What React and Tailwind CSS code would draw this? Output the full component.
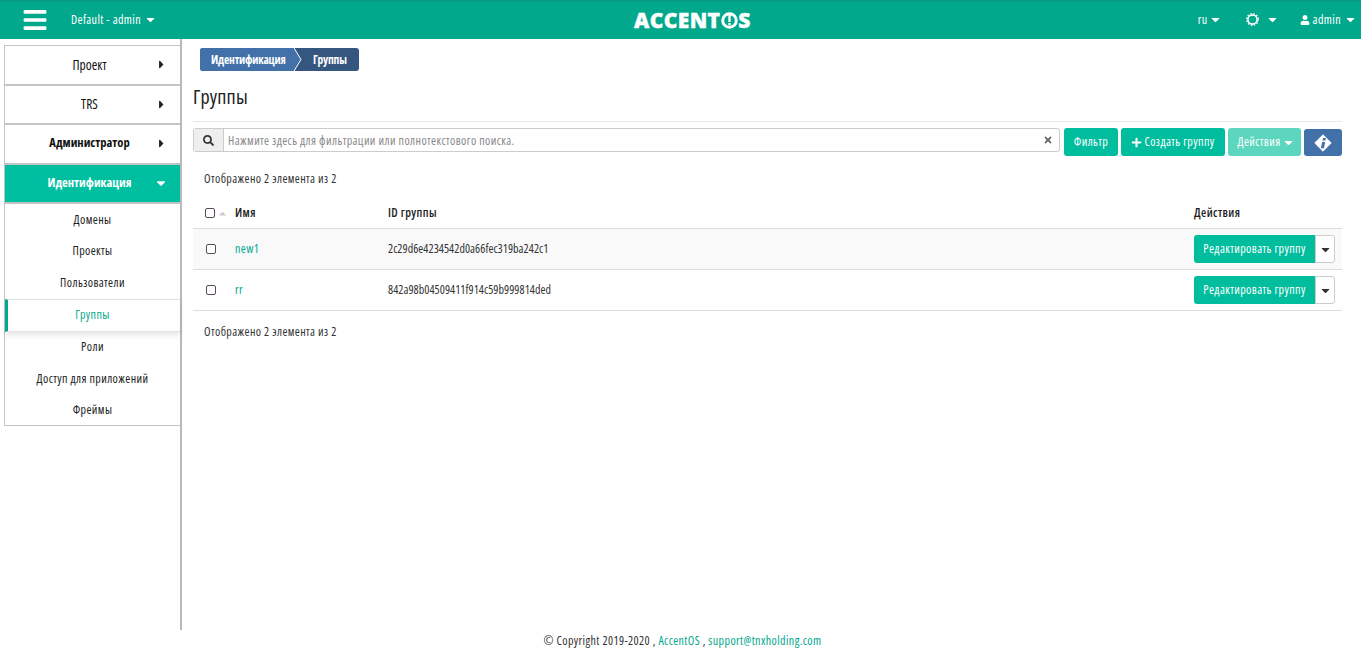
import React from "react";
import { FaBars, FaCaretRight, FaCaretDown, FaCaretUp, FaSearch, FaTimes, FaPlus, FaUser } from "react-icons/fa";

const sub = ["Домены", "Проекты", "Пользователи", "Группы", "Роли", "Доступ для приложений", "Фреймы"];

function Top({ label, bold, active }) {
  return (
    <div className={`relative flex h-[39.5px] items-center justify-center border-b-2 border-[#c4c4c4] tracking-normal [font-stretch:75%] ${bold ? "text-[12.5px] font-bold" : "text-[13.5px] font-medium"} ${active ? "bg-[#00bfa0] text-white" : "bg-white text-[#111]"}`}>
      <span className="mr-[6px]">{label}</span>
      {active ? (
        <FaCaretDown className="absolute right-[12px] text-[14px] text-white" />
      ) : (
        <FaCaretRight className="absolute right-[12px] text-[13px] text-[#222]" />
      )}
    </div>
  );
}

function Check() {
  return <span className="block h-[10px] w-[10px] rounded-[2px] border border-[#5b4a5e] bg-white" />;
}

function Row({ name, id, odd }) {
  return (
    <div className={`flex h-[41px] items-center border-b border-[#dddddd] ${odd ? "bg-[#f9f9f9]" : "bg-white"}`}>
      <div className="flex w-[42px] justify-center pb-[1px] pr-[6px]"><Check /></div>
      <div className="w-[153px] pb-[1px] text-[#00a88d]">{name}</div>
      <div className="flex-1 pb-[1px] tracking-[0.05px] text-[#333] [font-stretch:76%]">{id}</div>
      <div className="flex w-[148px] items-center">
        <span className="flex h-[28px] w-[121px] items-center justify-center rounded-l-[3px] bg-[#00bd9e] font-medium text-white">Редактировать группу</span>
        <span className="flex h-[28px] w-[20px] items-center justify-center rounded-r-[3px] border border-[#ccc] bg-white"><FaCaretDown className="text-[13px] text-[#333]" /></span>
      </div>
    </div>
  );
}

export default function App() {
  return (
    <div className="flex h-[652px] flex-col overflow-hidden bg-white text-[12px] tracking-[0.4px] text-[#333] [font-family:'Open_Sans','Noto_Sans',sans-serif] [font-stretch:82%]">
      <header className="relative flex h-[39px] shrink-0 items-center border-t-2 border-[#049b82] bg-[#02a88c] pb-[2px] text-white">
        <FaBars className="ml-[22px] text-[26px]" />
        <span className="ml-[23px] flex items-center gap-[3px] font-medium">Default - admin <FaCaretDown className="text-[13px]" /></span>
        <div className="absolute left-[634px] top-[6px] flex items-center text-[21px] font-extrabold leading-[24px] [-webkit-text-stroke:0.4px_white] [font-stretch:90%]">
          <span>ACCENT</span>
          <svg width="17" height="17" viewBox="0 0 17 17" className="mx-[0.5px]">
            <circle cx="8.5" cy="8.5" r="6.8" fill="none" stroke="#fff" strokeWidth="3" />
            <rect x="7.3" y="3" width="2.4" height="7" fill="#fff" />
            <rect x="7.3" y="11" width="2.4" height="2.2" fill="#fff" />
          </svg>
          <span>S</span>
        </div>
        <div className="ml-auto flex items-center font-medium">
          <span className="flex items-center gap-[1px]">ru <FaCaretDown className="text-[13px]" /></span>
          <span className="ml-[24px] flex items-center gap-[7px]">
            <svg width="13" height="13" viewBox="0 0 13 13"><circle cx="6.5" cy="6.5" r="4.6" fill="none" stroke="#fff" strokeWidth="1.6" /><circle cx="6.5" cy="6.5" r="5.9" fill="none" stroke="#fff" strokeWidth="1.2" strokeDasharray="1.5 1.6" /></svg>
            <FaCaretDown className="text-[13px]" />
          </span>
          <span className="ml-[21px] mr-[4px] flex items-center gap-[3px]"><FaUser className="text-[10px]" /> admin <FaCaretDown className="text-[13px]" /></span>
        </div>
      </header>

      <div className="flex min-h-0 flex-1">
        <aside className="h-[591px] w-[182px] shrink-0 border-r-2 border-[#b9b9b9] pl-[4px] pt-[6px]">
          <div className="border-l border-t border-b border-[#c4c4c4]">
            <Top label="Проект" />
            <Top label="TRS" />
            <Top label="Администратор" bold />
            <Top label="Идентификация" bold active />
            <div className="flex flex-col text-[#222]">
              {sub.map((s) =>
                s === "Группы" ? (
                  <div key={s} className="flex h-[33px] items-center justify-center border-y border-[#e3e3e3] border-l-[3px] border-l-[#02a88c] pr-[3px] text-[#02a88c] shadow-[0_3px_5px_rgba(0,0,0,0.1)]">{s}</div>
                ) : s === "Фреймы" ? (
                  <div key={s} className="flex h-[30.5px] items-center justify-center">{s}</div>
                ) : (
                  <div key={s} className="flex h-[31.5px] items-center justify-center">{s}</div>
                )
              )}
            </div>
          </div>
        </aside>

        <main className="min-w-0 flex-1 pl-[11px] pr-[19px] pt-[9px]">
          <div className="ml-[7px] flex h-[23px] w-[159px] items-center rounded-[3px] bg-[#35567f] text-[11.5px] font-bold tracking-[-0.2px] text-white [font-stretch:73%]">
            <div className="relative flex h-full w-[95px] items-center rounded-l-[3px] bg-[#4270a9] pl-[11px]">
              Идентификация
              <svg width="8" height="23" viewBox="0 0 8 23" className="absolute left-[94px] top-0"><path d="M0 0 L7 11.5 L0 23 Z" fill="#4270a9" /><path d="M0 0 L7 11.5 L0 23" fill="none" stroke="#fff" strokeWidth="1" /></svg>
            </div>
            <span className="ml-[18px]">Группы</span>
          </div>

          <h1 className="mt-[16px] h-[35px] border-b border-[#e8e8e8] text-[20px] font-normal leading-[20px] tracking-[0.2px] text-[#222]">Группы</h1>

          <div className="mt-[6px] flex items-start">
            <div className="flex h-[24px] flex-1 items-center rounded-[3px] border border-[#ccc]">
              <span className="flex h-full w-[30px] items-center justify-center border-r border-[#ccc] bg-[#eeeeee]"><FaSearch className="text-[11px] text-[#333]" /></span>
              <span className="ml-[4px] pt-[1px] text-[#888]">Нажмите здесь для фильтрации или полнотекстового поиска.</span>
              <FaTimes className="ml-auto mr-[6px] text-[10px] text-[#666]" />
            </div>
            <span className="ml-[4px] flex h-[28px] w-[54px] items-center justify-center rounded-[3px] bg-[#00bd9e] font-medium text-white">Фильтр</span>
            <span className="ml-[3px] flex h-[28px] w-[104px] items-center justify-center gap-[2px] rounded-[3px] bg-[#00bd9e] font-medium text-white"><FaPlus className="text-[11px]" />Создать группу</span>
            <span className="ml-[3px] flex h-[28px] w-[73px] items-center justify-center gap-[1px] rounded-[3px] bg-[#5dd6c0] pl-[3px] font-medium text-white">Действия <FaCaretDown className="text-[13px]" /></span>
            <span className="ml-[3px] mt-[1px] flex h-[27px] w-[38px] items-center justify-center rounded-[3px] bg-[#4270a9]">
              <svg width="18" height="18" viewBox="0 0 18 18">
                <polygon points="9,0.8 17.2,9 9,17.2 0.8,9" fill="#fff" stroke="#fff" strokeWidth="1" strokeLinejoin="round" />
                <polygon points="8.2,8 11.2,8 9.9,14.2 6.9,14.2" fill="#4270a9" />
                <polygon points="9,3.9 11.9,3.9 11.4,6.6 8.5,6.6" fill="#4270a9" />
              </svg>
            </span>
          </div>

          <p className="ml-[11px] mt-[16px] leading-[14px]">Отображено 2 элемента из 2</p>

          <div className="mt-[12px]">
            <div className="flex h-[31px] items-center border-b border-[#dddddd] font-semibold text-[#222]">
              <div className="flex w-[42px] items-center justify-center gap-[2px] pl-[4px]"><Check /><FaCaretUp className="text-[11px] text-[#ccc]" /></div>
              <div className="w-[153px]">Имя</div>
              <div className="flex-1">ID группы</div>
              <div className="w-[148px]">Действия</div>
            </div>
            <Row name="new1" id="2c29d6e4234542d0a66fec319ba242c1" odd />
            <Row name="rr" id="842a98b04509411f914c59b999814ded" />
          </div>

          <p className="ml-[11px] mt-[14px] leading-[14px]">Отображено 2 элемента из 2</p>
        </main>
      </div>

      <footer className="flex h-[22px] shrink-0 items-start justify-center pl-[4px] pt-[2px] text-[#333]">
        <span>© Copyright 2019-2020 , <span className="text-[#00a88d]">AccentOS</span> , <span className="text-[#00a88d]">support@tnxholding.com</span></span>
      </footer>
    </div>
  );
}
